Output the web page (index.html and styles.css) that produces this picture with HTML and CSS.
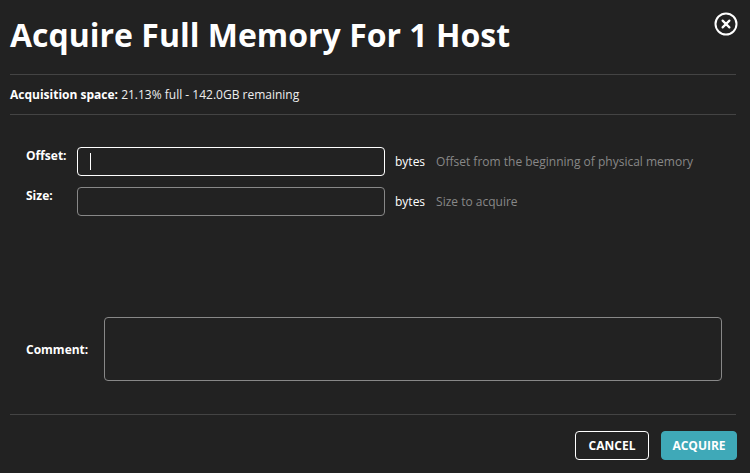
FILE: index.html
```html
<!DOCTYPE html>
<html>
<head>
<meta charset="utf-8">
<link rel="stylesheet" href="styles.css">
</head>
<body>
<div class="dialog">
  <header class="head">
    <h1 class="title">Acquire Full Memory For 1 Host</h1>
    <button class="close" aria-label="Close">
      <svg width="24" height="24" viewBox="0 0 24 24"><circle cx="12" cy="12" r="10.5" fill="none" stroke="#fff" stroke-width="2"/><path d="M8.6 8.6 L15.4 15.4 M15.4 8.6 L8.6 15.4" stroke="#fff" stroke-width="2.2" stroke-linecap="round"/></svg>
    </button>
  </header>
  <div class="space"><b>Acquisition space:</b> 21.13% full - 142.0GB remaining</div>
  <div class="form">
    <div class="row">
      <label class="lbl">Offset:</label>
      <div class="input focused"><span class="caret"></span></div>
      <span class="unit">bytes</span>
      <span class="help">Offset from the beginning of physical memory</span>
    </div>
    <div class="row">
      <label class="lbl">Size:</label>
      <div class="input"></div>
      <span class="unit">bytes</span>
      <span class="help">Size to acquire</span>
    </div>
    <div class="comment-row">
      <label class="lbl">Comment:</label>
      <div class="textarea"></div>
    </div>
  </div>
  <footer class="foot">
    <button class="btn cancel">CANCEL</button>
    <button class="btn acquire">ACQUIRE</button>
  </footer>
</div>
</body>
</html>
```
FILE: styles.css
```css
html, body { margin: 0; padding: 0; background: #222222; }
body { font-family: "Open Sans", "Liberation Sans", sans-serif; color: #fff; width: 750px; height: 473px; overflow: hidden; }
.dialog { padding: 0 14px 0 10px; }
.head { display: flex; justify-content: space-between; align-items: flex-start; height: 74px; border-bottom: 1px solid #444; }
.title { margin: 0; padding-top: 13px; font-size: 32px; font-weight: 700; line-height: 44px; letter-spacing: 0; }
.close { background: none; border: 0; padding: 0; margin: 12px -2px 0 0; width: 24px; height: 24px; cursor: pointer; }
.close svg { display: block; }
.space { font-size: 12px; height: 39px; line-height: 40px; border-bottom: 1px solid #444; color: #eee; }
.space b { font-weight: 700; color: #fff; }
.form { padding: 32px 0 0 16px; height: 300px; box-sizing: border-box; border-bottom: 1px solid #444; }
.row { display: flex; align-items: flex-start; height: 40px; }
.lbl { font-size: 12px; font-weight: 700; width: 51px; line-height: 16px; padding-top: 1px; }
.input { width: 306px; height: 27px; border: 1px solid #888; border-radius: 4px; box-sizing: content-box; position: relative; }
.input.focused { border-color: #fff; }
.caret { position: absolute; left: 12px; top: 5px; width: 1px; height: 17px; background: #fff; }
.unit { font-size: 12px; margin-left: 10px; line-height: 28px; padding-top: 1px; color: #fff; }
.help { font-size: 12px; margin-left: 11px; line-height: 28px; padding-top: 1px; color: #888; }
.comment-row { display: flex; align-items: center; margin-top: 90px; }
.comment-row .lbl { width: 78px; }
.textarea { width: 616px; height: 62px; border: 1px solid #888; border-radius: 4px; }
.foot { display: flex; justify-content: flex-end; gap: 12px; padding-top: 16px; margin-right: -1px; }
.btn { font-family: "Open Sans", "Liberation Sans", sans-serif; font-size: 12px; font-weight: 700; color: #fff; height: 29px; border-radius: 4px; padding: 0 10px; cursor: pointer; }
.cancel { background: #222; border: 1px solid #fff; width: 74px; }
.acquire { background: #3fa9b8; border: 1px solid #3fa9b8; width: 76px; }
```
